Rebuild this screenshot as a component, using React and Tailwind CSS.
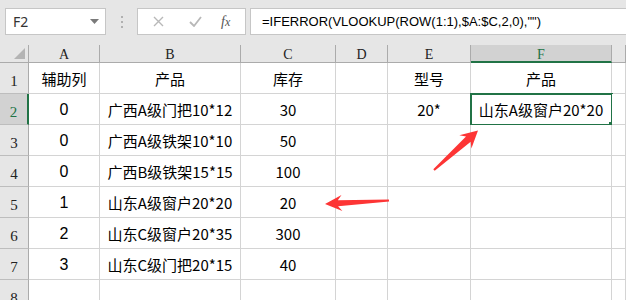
import React from 'react';

// 列宽与数据：跟截图里的 Excel 网格一一对应
const COLS = [
  { key: 'A', w: 'w-[71px]' },
  { key: 'B', w: 'w-[141px]' },
  { key: 'C', w: 'w-[95px]' },
  { key: 'D', w: 'w-[52px]' },
  { key: 'E', w: 'w-[83px]' },
  { key: 'F', w: 'w-[141px]' },
  { key: 'G', w: 'flex-1' },
];

const ROWS = [
  ['辅助列', '产品', '库存', '', '型号', '产品', ''],
  ['0', '广西A级门把10*12', '30', '', '20*', '山东A级窗户20*20', ''],
  ['0', '广西A级铁架10*10', '50', '', '', '', ''],
  ['0', '广西B级铁架15*15', '100', '', '', '', ''],
  ['1', '山东A级窗户20*20', '20', '', '', '', ''],
  ['2', '山东C级窗户20*35', '300', '', '', '', ''],
  ['3', '山东C级门把20*15', '40', '', '', '', ''],
  ['', '', '', '', '', '', ''],
];

const CJK = { fontFamily: '"Noto Sans CJK SC", sans-serif' };
const HEAD = { fontFamily: '"Liberation Serif", serif' };

// 箭头多边形：从尾到尖，头部加宽、杆身渐细
function arrowPoints([tx, ty], [px, py], headLen, headHalf, shaftHalf, tailHalf) {
  const len = Math.hypot(px - tx, py - ty);
  const ux = (px - tx) / len;
  const uy = (py - ty) / len;
  const nx = -uy;
  const ny = ux;
  const bx = px - ux * headLen;
  const by = py - uy * headLen;
  const sx = px - ux * (headLen - 4);
  const sy = py - uy * (headLen - 4);
  const pts = [
    [px, py],
    [bx + nx * headHalf, by + ny * headHalf],
    [sx + nx * shaftHalf, sy + ny * shaftHalf],
    [tx + nx * tailHalf, ty + ny * tailHalf],
    [tx - nx * tailHalf, ty - ny * tailHalf],
    [sx - nx * shaftHalf, sy - ny * shaftHalf],
    [bx - nx * headHalf, by - ny * headHalf],
  ];
  return pts.map((p) => p.map((v) => v.toFixed(1)).join(',')).join(' ');
}

function Toolbar() {
  return (
    <div className="h-[45px] bg-[#e6e6e6] flex items-start pt-[8px] pl-[5px]">
      <div className="w-[101px] h-[27px] bg-white border border-[#c6c6c6] flex items-center justify-between pl-[7px] pr-[6px]">
        <span className="text-[14px] text-[#333]" style={{ fontFamily: '"Noto Sans", sans-serif' }}>F2</span>
        <svg width="9" height="5" viewBox="0 0 9 5"><path d="M0 0h9L4.5 5z" fill="#7a7a7a" /></svg>
      </div>
      <div className="w-[31px] h-[27px] flex flex-col items-center justify-center gap-[3px]">
        <span className="w-[2px] h-[2px] bg-[#b0b0b0]" />
        <span className="w-[2px] h-[2px] bg-[#b0b0b0]" />
        <span className="w-[2px] h-[2px] bg-[#b0b0b0]" />
      </div>
      <div className="w-[109px] h-[27px] bg-white border border-[#c6c6c6] flex items-center">
        <svg className="ml-[15px]" width="11" height="11" viewBox="0 0 11 11">
          <path d="M1 1l9 9M10 1l-9 9" stroke="#b8b8b8" strokeWidth="1.4" />
        </svg>
        <svg className="ml-[25px]" width="13" height="11" viewBox="0 0 13 11">
          <path d="M1 6l4 4 7-9" stroke="#b8b8b8" strokeWidth="1.8" fill="none" />
        </svg>
        <span className="ml-[19px] text-[14px] italic text-[#555]" style={{ fontFamily: '"Liberation Serif", serif' }}>
          f<span className="text-[12px]">x</span>
        </span>
      </div>
      <div className="ml-[4px] flex-1 h-[27px] bg-white border border-[#c6c6c6] border-r-0 flex items-center pl-[11px]">
        <span className="text-[13px] text-black whitespace-nowrap" style={{ fontFamily: '"Liberation Sans", sans-serif' }}>
          =IFERROR(VLOOKUP(ROW(1:1),$A:$C,2,0),"")
        </span>
      </div>
    </div>
  );
}

function HeaderRow() {
  return (
    <div className="flex h-[18px] bg-[#e6e6e6]">
      <div className="w-[29px] h-full border-r border-b border-[#ababab] flex items-end justify-end pr-[3px] pb-[3px]">
        <svg width="11" height="11" viewBox="0 0 11 11"><path d="M11 0v11H0z" fill="#b4b4b4" /></svg>
      </div>
      {COLS.map((c) => {
        const sel = c.key === 'F';
        return (
          <div
            key={c.key}
            className={
              sel
                ? `${c.w} h-full bg-[#d2d2d2] border-r border-[#ababab] border-b-2 border-b-[#217346] flex items-center justify-center text-[14px] text-[#217346] pt-[2px]`
                : `${c.w} h-full border-r border-b border-[#ababab] flex items-center justify-center text-[14px] text-[#222] pt-[1px]`
            }
            style={HEAD}
          >
            {c.key === 'G' ? '' : c.key}
          </div>
        );
      })}
    </div>
  );
}

function DataRow({ n, cells }) {
  const sel = n === 2;
  return (
    <div className="flex h-[31px]">
      <div
        className={
          sel
            ? 'w-[29px] h-full bg-[#d2d2d2] border-r-2 border-r-[#217346] border-b border-b-[#bdbdbd] flex items-end justify-center pb-[1px] text-[15px] text-[#217346]'
            : 'w-[29px] h-full bg-[#e6e6e6] border-r border-r-[#ababab] border-b border-b-[#bdbdbd] flex items-end justify-center pb-[1px] text-[15px] text-[#222]'
        }
        style={HEAD}
      >
        {n}
      </div>
      {COLS.map((c, i) => {
        const active = sel && c.key === 'F';
        const v = cells[i];
        return (
          <div
            key={c.key}
            className={`${c.w} relative h-full bg-white border-r border-b border-[#d4d4d4] flex items-center justify-center pt-[2px] text-[15px] text-black whitespace-nowrap`}
            style={c.key === 'A' && n > 1 ? { fontFamily: '"Liberation Sans", sans-serif', fontSize: '16px' } : CJK}
          >
            {v}
            {active && (
              <>
                <div className="absolute -left-[1px] -top-[1px] -right-[2px] -bottom-[2px] border-2 border-[#217346]" />
                <div className="absolute -right-[3px] -bottom-[3px] w-[5px] h-[5px] bg-[#217346]" />
              </>
            )}
          </div>
        );
      })}
    </div>
  );
}

export default function App() {
  return (
    <div className="relative w-[626px] h-[300px] overflow-hidden bg-white">
      <Toolbar />
      <HeaderRow />
      {ROWS.map((cells, i) => (
        <DataRow key={i} n={i + 1} cells={cells} />
      ))}
      <svg className="absolute inset-0 pointer-events-none" width="626" height="300">
        <polygon points={arrowPoints([389, 200.5], [325, 204], 17, 8, 3, 1)} fill="#fd3535" />
        <polygon points={arrowPoints([434, 170], [478, 130.5], 17, 9, 3.5, 1)} fill="#fd3535" />
      </svg>
    </div>
  );
}
